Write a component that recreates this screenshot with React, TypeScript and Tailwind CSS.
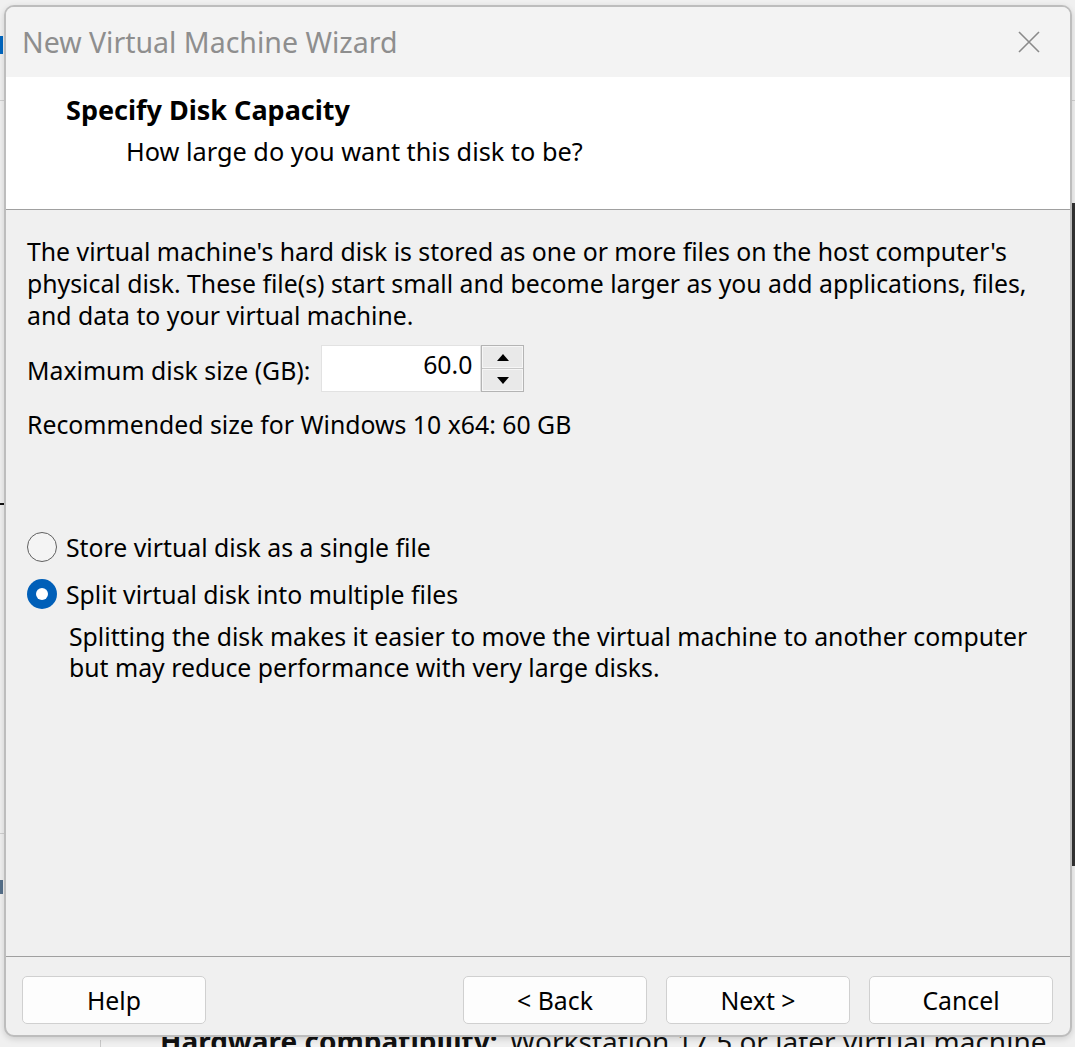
import React from 'react';

const font = { fontFamily: '"Noto Sans", "Open Sans", sans-serif' };

function Radio({ checked, label }: { checked?: boolean; label: string }) {
  return (
    <div className="flex items-center h-[32px] gap-[9px]">
      {checked ? (
        <span className="w-[30px] h-[30px] rounded-full bg-[#005fb8] flex items-center justify-center">
          <span className="w-[12px] h-[12px] rounded-full bg-white" />
        </span>
      ) : (
        <span className="w-[30px] h-[30px] rounded-full border-[1.5px] border-[#606060] bg-[#f4f4f4]" />
      )}
      <span className="whitespace-nowrap">{label}</span>
    </div>
  );
}

function Button({ children }: { children: React.ReactNode }) {
  return (
    <button className="w-[184px] h-[48px] rounded-[5px] border border-[#d0d0d0] bg-[#fdfdfd] text-[24.8px] leading-[32px] text-black">
      {children}
    </button>
  );
}

export default function App() {
  return (
    <div className="relative w-[1075px] h-[1047px] overflow-hidden bg-[#f0f0f0] text-black" style={font}>
      {/* desktop behind the dialog */}
      <div className="absolute left-0 top-[36px] w-[3px] h-[18px] bg-[#0067c0]" />
      <div className="absolute left-0 top-[100px] w-[5px] h-px bg-[#d0d0d0]" />
      <div className="absolute left-0 top-[503px] w-[6px] h-[2px] bg-[#111]" />
      <div className="absolute left-0 top-[833px] w-[5px] h-px bg-[#d0d0d0]" />
      <div className="absolute left-0 top-[880px] w-[3px] h-[14px] bg-[#55708a]" />
      <div className="absolute right-0 top-[100px] w-[4px] h-px bg-[#d0d0d0]" />
      <div className="absolute right-0 top-[203px] w-[3px] h-[663px] bg-[#333333]" />
      <div className="absolute left-[100px] top-[1040px] w-px h-[8px] bg-[#c8c8c8]" />
      <div className="absolute left-[160px] top-[1024px] flex items-baseline gap-[12px] whitespace-nowrap text-[28px] leading-[34px] text-[#111]">
        <span className="font-bold">Hardware compatibility:</span>
        <span>Workstation 17.5 or later virtual machine</span>
      </div>

      {/* dialog window */}
      <div className="absolute left-[4px] top-[5px] w-[1068px] h-[1032px] rounded-[10px] border-2 border-[#bdbdbd] bg-[#f0f0f0] flex flex-col overflow-hidden shadow-[0_2px_6px_rgba(0,0,0,0.15)]">
        <div className="h-[70px] shrink-0 bg-[#f3f3f3] flex items-center justify-between pl-[16px] pr-[30px]">
          <span className="text-[28.5px] text-[#8e8e8e] whitespace-nowrap">New Virtual Machine Wizard</span>
          <svg width="22" height="22" viewBox="0 0 22 22" fill="none" stroke="#8a8a8a" strokeWidth="1.6">
            <path d="M1 1L21 21M21 1L1 21" />
          </svg>
        </div>

        <div className="h-[133px] shrink-0 bg-white border-b border-[#a0a0a0] pt-[17px] pl-[60px]">
          <div className="text-[27px] leading-[32px] font-bold whitespace-nowrap">Specify Disk Capacity</div>
          <div className="mt-[9px] pl-[60px] text-[25.3px] leading-[32px] whitespace-nowrap">How large do you want this disk to be?</div>
        </div>

        <div className="flex-1 pt-[25px] pl-[21px] text-[24.8px] leading-[32px]">
          <div className="whitespace-nowrap">
            <div>The virtual machine's hard disk is stored as one or more files on the host computer's</div>
            <div>physical disk. These file(s) start small and become larger as you add applications, files,</div>
            <div>and data to your virtual machine.</div>
          </div>

          <div className="mt-[14px] flex items-center">
            <span className="whitespace-nowrap mt-[2px]">Maximum disk size (GB):</span>
            <div className="ml-[11px] flex">
              <div className="w-[160px] h-[47px] bg-white border border-[#e2e2e2] flex items-center justify-end pr-[8px] pb-[9px]">
                60.0
              </div>
              <div className="w-[43px] h-[47px] border border-[#b4b4b4] bg-[#c8c8c8] flex flex-col gap-px">
                <div className="flex-1 bg-[#e9e9e9] border border-[#f6f6f6] flex items-center justify-center">
                  <svg width="12" height="7" viewBox="0 0 12 7"><path d="M6 0L12 7H0Z" fill="#000" /></svg>
                </div>
                <div className="flex-1 bg-[#e9e9e9] border border-[#f6f6f6] flex items-center justify-center">
                  <svg width="12" height="7" viewBox="0 0 12 7"><path d="M0 0H12L6 7Z" fill="#000" /></svg>
                </div>
              </div>
            </div>
          </div>

          <div className="mt-[16px] whitespace-nowrap">Recommended size for Windows 10 x64: 60 GB</div>

          <div className="mt-[91px]">
            <Radio label="Store virtual disk as a single file" />
          </div>
          <div className="mt-[15px]">
            <Radio checked label="Split virtual disk into multiple files" />
          </div>
          <div className="mt-[11px] pl-[42px] leading-[31px] whitespace-nowrap">
            <div>Splitting the disk makes it easier to move the virtual machine to another computer</div>
            <div>but may reduce performance with very large disks.</div>
          </div>
        </div>

        <div className="h-[79px] shrink-0 border-t border-[#a0a0a0] pt-[19px] pl-[16px] pr-[17px] flex justify-between">
          <Button>Help</Button>
          <div className="flex gap-[19px]">
            <Button>&lt; Back</Button>
            <Button>Next &gt;</Button>
            <Button>Cancel</Button>
          </div>
        </div>
      </div>
    </div>
  );
}
